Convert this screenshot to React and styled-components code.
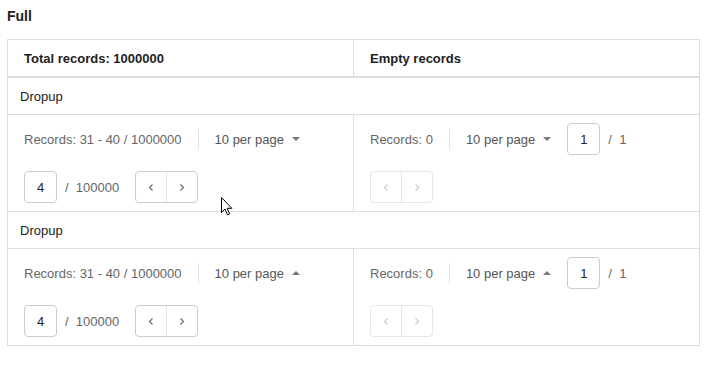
import React from "react";
import styled, { createGlobalStyle } from "styled-components";

const GlobalStyle = createGlobalStyle`
  body {
    margin: 0;
    background: #ffffff;
    font-family: "Liberation Sans", Arial, sans-serif;
    font-size: 13px;
    color: #222;
  }
`;

const Page = styled.div`
  position: relative;
  padding: 8px 0 0 7px;
  width: 693px;
`;

const Heading = styled.div`
  font-size: 14px;
  font-weight: bold;
  line-height: 16px;
  color: #222;
  margin-bottom: 15px;
`;

const Table = styled.div`
  border: 1px solid #ddd;
`;

const Row = styled.div`
  display: grid;
  grid-template-columns: ${({ span }) => (span ? "1fr" : "345px 1fr")};
  border-bottom: ${({ thick }) => (thick ? "2px" : "1px")} solid #ddd;

  &:last-child {
    border-bottom: none;
  }
`;

const HeadCell = styled.div`
  height: 36px;
  display: flex;
  align-items: center;
  padding: 0 16px;
  font-weight: bold;
  color: #222;
  & + & {
    border-left: 1px solid #ddd;
  }
`;

const GroupCell = styled.div`
  height: 36px;
  display: flex;
  align-items: center;
  padding: 0 12px;
  color: #222;
`;

const Cell = styled.div`
  padding: 8px 16px;
  min-width: 0;
  & + & {
    border-left: 1px solid #ddd;
  }
`;

const Pagination = styled.div`
  display: flex;
  flex-wrap: wrap;
  align-items: center;
  row-gap: 16px;
  color: #666;
`;

const Info = styled.div`
  height: 32px;
  display: flex;
  align-items: center;
  white-space: nowrap;
`;

const Separator = styled.div`
  width: 1px;
  height: 20px;
  background: #ddd;
  margin: 0 16px;
`;

const PerPage = styled.div`
  height: 32px;
  display: flex;
  align-items: center;
  gap: 8px;
  margin-right: 16px;
  color: #555;
  white-space: nowrap;
`;

const Caret = styled.span`
  width: 0;
  height: 0;
  border-left: 4px solid transparent;
  border-right: 4px solid transparent;
  ${({ up }) =>
    up ? "border-bottom: 4px solid #777;" : "border-top: 4px solid #777;"}
`;

const Jump = styled.div`
  display: flex;
  align-items: center;
  gap: 8px;
  margin-right: 16px;
  white-space: nowrap;
`;

const PageInput = styled.div`
  width: 33px;
  height: 32px;
  box-sizing: border-box;
  border: 1px solid #ccc;
  border-radius: 4px;
  display: flex;
  align-items: center;
  justify-content: center;
  color: #222;
`;

const NavGroup = styled.div`
  display: flex;
  height: 32px;
  box-sizing: border-box;
  border: 1px solid ${({ disabled }) => (disabled ? "#e6e6e6" : "#ccc")};
  border-radius: 4px;
`;

const NavButton = styled.div`
  width: 30px;
  display: flex;
  align-items: center;
  justify-content: center;
  color: ${({ disabled }) => (disabled ? "#c8c8c8" : "#666")};
  & + & {
    border-left: 1px solid ${({ disabled }) => (disabled ? "#e6e6e6" : "#ccc")};
  }
`;

const Cursor = styled.svg`
  position: absolute;
  left: 221px;
  top: 197px;
`;

const Chevron = ({ dir }) => (
  <svg width="6" height="9" viewBox="0 0 6 9">
    <polyline
      points={dir === "left" ? "4.5,1.5 1.5,4.5 4.5,7.5" : "1.5,1.5 4.5,4.5 1.5,7.5"}
      fill="none"
      stroke="currentColor"
      strokeWidth="1.1"
    />
  </svg>
);

const Pager = ({ info, page, total, up, disabled }) => (
  <Pagination>
    <Info>{info}</Info>
    <Separator />
    <PerPage>
      10 per page <Caret up={up} />
    </PerPage>
    <Jump>
      <PageInput>{page}</PageInput>
      <span>/&nbsp; {total}</span>
    </Jump>
    <NavGroup disabled={disabled}>
      <NavButton disabled={disabled}>
        <Chevron dir="left" />
      </NavButton>
      <NavButton disabled={disabled}>
        <Chevron dir="right" />
      </NavButton>
    </NavGroup>
  </Pagination>
);

const Section = ({ up }) => (
  <>
    <Row span>
      <GroupCell>Dropup</GroupCell>
    </Row>
    <Row>
      <Cell>
        <Pager info="Records: 31 - 40 / 1000000" page="4" total="100000" up={up} />
      </Cell>
      <Cell>
        <Pager info="Records: 0" page="1" total="1" up={up} disabled />
      </Cell>
    </Row>
  </>
);

export default function App() {
  return (
    <Page>
      <GlobalStyle />
      <Heading>Full</Heading>
      <Table>
        <Row thick>
          <HeadCell>Total records: 1000000</HeadCell>
          <HeadCell>Empty records</HeadCell>
        </Row>
        <Section />
        <Section up />
      </Table>
      <Cursor width="12" height="19" viewBox="0 0 12 19">
        <path
          d="M0.5,0.5 L0.5,15.5 L4,12 L6.5,17.8 L8.6,16.9 L6.2,11.3 L10.8,11.3 Z"
          fill="#fff"
          stroke="#000"
          strokeWidth="1"
        />
      </Cursor>
    </Page>
  );
}
